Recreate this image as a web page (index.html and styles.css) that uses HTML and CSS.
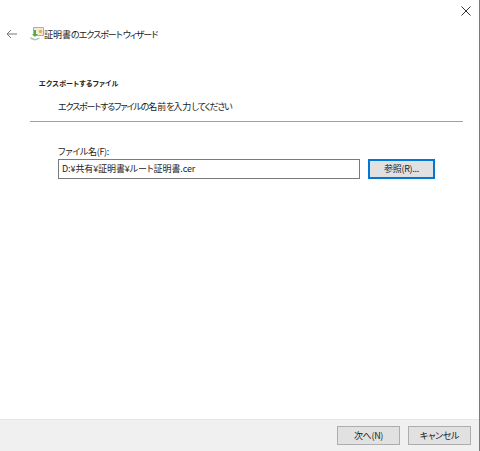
FILE: index.html
```html
<!DOCTYPE html>
<html lang="ja">
<head>
    <meta charset="UTF-8">
    <title>証明書のエクスポート ウィザード</title>
    <link rel="stylesheet" href="styles.css">
</head>
<body>
    <div class="wizard">
        <div class="close_row">
            <svg class="close_icon" width="10" height="10" viewBox="0 0 10 10">
                <path d="M0.5 0.5L9.5 9.5M9.5 0.5L0.5 9.5" stroke="#333" stroke-width="1" fill="none"/>
            </svg>
        </div>
        <div class="title_row">
            <svg class="back_icon" width="11" height="10" viewBox="0 0 11 10">
                <path d="M11 5H1M5 1L1 5L5 9" stroke="#777" stroke-width="1" fill="none"/>
            </svg>
            <svg class="cert_icon" width="14" height="14" viewBox="0 0 14 14">
                <path d="M3.5 0.5H13.5V8.5H3.5Z" fill="#f1ece0" stroke="#a8adb0" stroke-width="1"/>
                <circle cx="10.5" cy="4.5" r="1.8" fill="#f0b429"/>
                <path d="M4 3V7H2L5 10L8 7H6V3Z" fill="#58ad47"/>
                <path d="M0.5 10L5 12L9.5 10.5L9.5 12L5 13.5L0.5 12Z" fill="#b4bcc1"/>
            </svg>
            <span class="title">証明書<span class="kana">のエクスポート ウィザード</span></span>
        </div>
        <div class="head">
            <div class="head_title">エクスポートするファイル</div>
            <div class="head_sub"><span class="kana_sub">エクスポートするファイルの</span>名前<span class="kana_sub">を</span>入力<span class="kana_sub">してください</span></div>
        </div>
        <div class="line"></div>
        <div class="form">
            <div class="label">ファイル名(F):</div>
            <div class="file_row">
                <div class="file_input">D:¥共有¥証明書¥ルート証明書.cer</div>
                <div class="btn btn_focus">参照(R)...</div>
            </div>
        </div>
        <div class="footer">
            <div class="btn">次へ(N)</div>
            <div class="btn">キャンセル</div>
        </div>
    </div>
</body>
</html>
```

FILE: styles.css
```css
html,body{
  margin: 0;
  padding: 0;
}
body{
  width: 480px;
  height: 451px;
  overflow: hidden;
  background-color: white;
  font-family: "Noto Sans CJK JP", "Liberation Sans", sans-serif;
  font-feature-settings: "palt";
  color: #222;
}
.wizard{
  width: 479px;
  height: 451px;
  border-right: 1px solid #2b8fd8;
  display: flex;
  flex-direction: column;
}
.close_row{
  height: 25px;
  display: flex;
  justify-content: flex-end;
  align-items: flex-start;
  padding: 6px 8px 0 0;
  box-sizing: border-box;
}
.title_row{
  height: 18px;
  display: flex;
  align-items: center;
  padding-left: 6px;
}
.back_icon{
  margin-right: 13px;
}
.title{
  font-size: 9px;
}
.kana{
  letter-spacing: -1px;
}
.kana_sub{
  letter-spacing: -1.15px;
}
.head{
  padding: 34px 0 0 39px;
}
.head_title{
  font-size: 7px;
  font-weight: bold;
  line-height: 12px;
  letter-spacing: 0.25px;
}
.head_sub{
  font-size: 9px;
  line-height: 14px;
  padding: 11px 0 0 19px;
}
.line{
  height: 1px;
  margin: 7px 16px 0 30px;
  background-color: #a0a0a0;
}
.form{
  padding: 24px 0 0 58px;
  flex-grow: 1;
}
.label{
  font-size: 9px;
  line-height: 12px;
  letter-spacing: -0.3px;
  margin-bottom: 1px;
}
.file_row{
  display: flex;
  align-items: center;
  gap: 8px;
}
.file_input{
  width: 297px;
  height: 18px;
  border: 1px solid #7a7a7a;
  padding-left: 3px;
  font-size: 9px;
  line-height: 18px;
  letter-spacing: -0.1px;
}
.footer{
  height: 31px;
  background-color: #f0f0f0;
  border-top: 1px solid #e6e6e6;
  display: flex;
  justify-content: flex-end;
  align-items: center;
  gap: 8px;
  padding-right: 8px;
}
.btn{
  width: 61px;
  height: 17px;
  background-color: #e1e1e1;
  border: 1px solid #adadad;
  font-size: 9px;
  line-height: 17px;
  text-align: center;
  letter-spacing: -0.3px;
}
.btn_focus{
  width: 63px;
  height: 16px;
  border: 2px solid #0078d7;
  line-height: 16px;
}
```
